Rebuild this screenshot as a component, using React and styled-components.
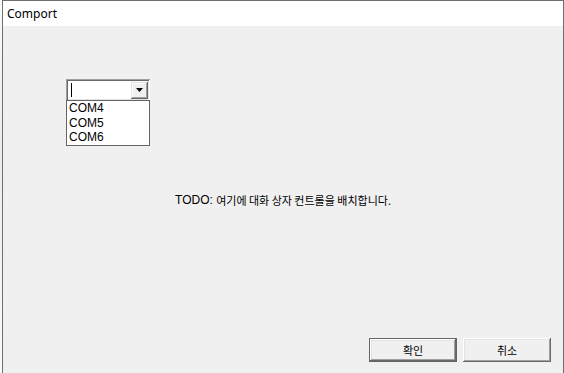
import styled, { createGlobalStyle } from "styled-components";

const GlobalStyle = createGlobalStyle`
  html, body {
    margin: 0;
    padding: 0;
    background: #ffffff;
  }
  #root {
    width: 564px;
    height: 373px;
  }
`;

const Screen = styled.div`
  display: flex;
  width: 564px;
  height: 373px;
  overflow: hidden;
`;

const Backdrop = styled.div`
  width: 2px;
  background: linear-gradient(#fafafa 0, #e8efe8 40%, #fafafa 100%);
`;

const Window = styled.div`
  flex: 1;
  display: flex;
  flex-direction: column;
  border: 1px solid #6f6f6f;
  border-bottom: none;
  background: #f0f0f0;
`;

const TitleBar = styled.div`
  height: 25px;
  display: flex;
  align-items: center;
  padding-left: 4px;
  background: #ffffff;
  font-family: "Noto Sans", "Open Sans", sans-serif;
  font-size: 12px;
  color: #000;
`;

const Body = styled.div`
  flex: 1;
  display: flex;
  flex-direction: column;
  font-family: "Liberation Sans", Arial, "Noto Sans CJK KR", sans-serif;
  font-size: 12px;
  color: #000;
`;

const ComboArea = styled.div`
  padding: 53px 0 0 63px;
`;

const Combo = styled.div`
  position: relative;
  width: 84px;
  height: 22px;
  box-sizing: border-box;
  display: flex;
  align-items: center;
  justify-content: space-between;
  background: #ffffff;
  box-shadow: inset 1px 1px #a0a0a0, inset -1px -1px #ffffff,
    inset 2px 2px #696969, inset -2px -2px #e3e3e3;
  padding: 2px;
`;

const Caret = styled.span`
  width: 1px;
  height: 14px;
  margin-left: 3px;
  background: #000;
`;

const DropButton = styled.div`
  width: 17px;
  height: 17px;
  box-sizing: border-box;
  display: flex;
  align-items: center;
  justify-content: center;
  background: #f0f0f0;
  box-shadow: inset -1px -1px #696969, inset 1px 1px #e3e3e3,
    inset -2px -2px #a0a0a0, inset 2px 2px #ffffff;
`;

const DropList = styled.ul`
  position: absolute;
  top: 21px;
  left: 0;
  width: 84px;
  margin: 0;
  padding: 0;
  list-style: none;
  box-sizing: border-box;
  border: 1px solid #646464;
  background: #ffffff;
`;

const DropItem = styled.li`
  height: 14.7px;
  line-height: 15px;
  padding-left: 2px;
  color: #000;
`;

const Message = styled.div`
  flex: 1;
  display: flex;
  align-items: center;
  justify-content: center;
  white-space: pre;
`;

const Hangul = styled.span`
  font-family: "Noto Sans CJK KR", sans-serif;
  font-size: 11px;
`;

const Footer = styled.div`
  display: flex;
  justify-content: flex-end;
  gap: 6px;
  padding: 40px 12px 11px 0;
`;

const Button = styled.button`
  width: 88px;
  height: 24px;
  box-sizing: border-box;
  padding: 0;
  border: ${(p) => (p.$default ? "1px solid #646464" : "none")};
  background: #f0f0f0;
  font-family: "Noto Sans CJK KR", sans-serif;
  font-size: 11px;
  color: #000;
  box-shadow: inset -1px -1px #696969, inset 1px 1px #ffffff,
    inset -2px -2px #a0a0a0, inset 2px 2px #e3e3e3;
`;

const items = ["COM4", "COM5", "COM6"];

export default function App() {
  return (
    <>
      <GlobalStyle />
      <Screen>
        <Backdrop />
        <Window>
          <TitleBar>Comport</TitleBar>
          <Body>
            <ComboArea>
              <Combo>
                <Caret />
                <DropButton>
                  <svg width="7" height="4" viewBox="0 0 7 4">
                    <path d="M0 0h7L3.5 4z" fill="#000" />
                  </svg>
                </DropButton>
                <DropList>
                  {items.map((it) => (
                    <DropItem key={it}>{it}</DropItem>
                  ))}
                </DropList>
              </Combo>
            </ComboArea>
            <Message>
              TODO: <Hangul>여기에 대화 상자 컨트롤을 배치합니다.</Hangul>
            </Message>
            <Footer>
              <Button $default>확인</Button>
              <Button>취소</Button>
            </Footer>
          </Body>
        </Window>
      </Screen>
    </>
  );
}
